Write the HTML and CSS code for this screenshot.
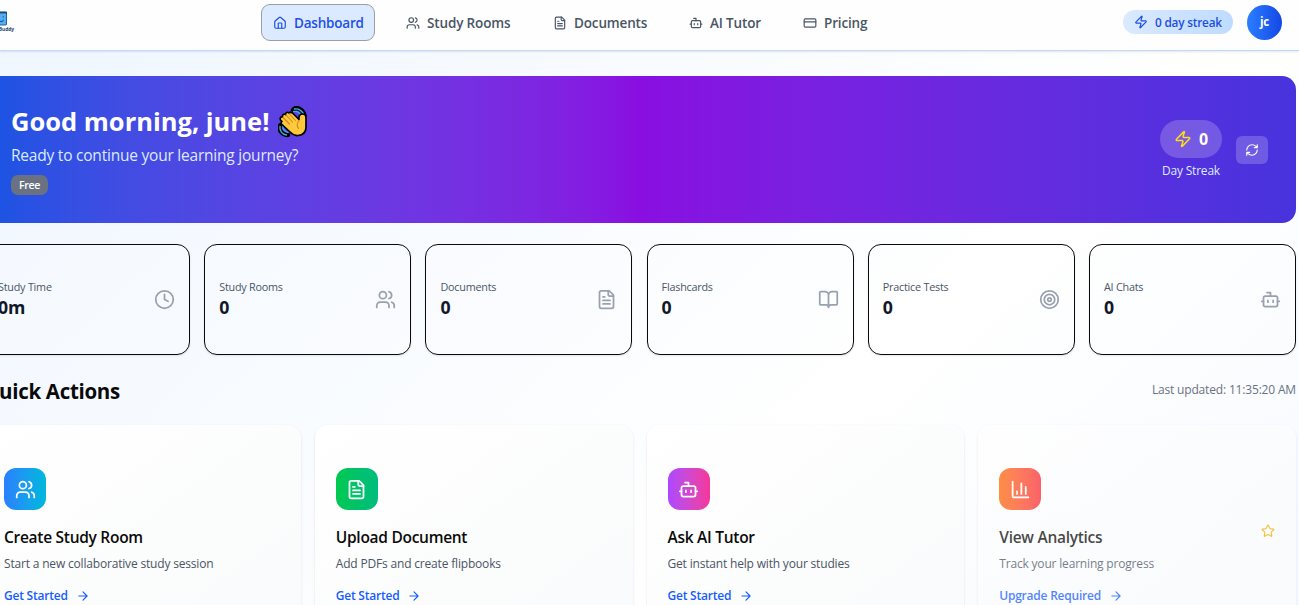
FILE: index.html
```html
<!DOCTYPE html>
<html lang="en">
<head>
<meta charset="utf-8">
<title>Study Buddy</title>
<link rel="stylesheet" href="styles.css">
</head>
<body>
<svg class="sprite" aria-hidden="true">
  <symbol id="home" viewBox="0 0 24 24"><path d="M15 21v-8a1 1 0 0 0-1-1h-4a1 1 0 0 0-1 1v8"/><path d="M3 10a2 2 0 0 1 .7-1.5l7-6a2 2 0 0 1 2.6 0l7 6A2 2 0 0 1 21 10v9a2 2 0 0 1-2 2H5a2 2 0 0 1-2-2z"/></symbol>
  <symbol id="users" viewBox="0 0 24 24"><path d="M16 21v-2a4 4 0 0 0-4-4H6a4 4 0 0 0-4 4v2"/><circle cx="9" cy="7" r="4"/><path d="M22 21v-2a4 4 0 0 0-3-3.87M16 3.13a4 4 0 0 1 0 7.75"/></symbol>
  <symbol id="file" viewBox="0 0 24 24"><path d="M15 2H6a2 2 0 0 0-2 2v16a2 2 0 0 0 2 2h12a2 2 0 0 0 2-2V7Z"/><path d="M14 2v4a2 2 0 0 0 2 2h4M10 9H8M16 13H8M16 17H8"/></symbol>
  <symbol id="bot" viewBox="0 0 24 24"><path d="M12 8V4H8"/><rect x="4" y="8" width="16" height="12" rx="2"/><path d="M2 14h2M20 14h2M15 13v2M9 13v2"/></symbol>
  <symbol id="card" viewBox="0 0 24 24"><rect x="2" y="5" width="20" height="14" rx="2"/><path d="M2 10h20"/></symbol>
  <symbol id="zap" viewBox="0 0 24 24"><path d="M4 14a1 1 0 0 1-.78-1.63l9.9-10.2a.5.5 0 0 1 .86.46l-1.92 6.02A1 1 0 0 0 13 10h7a1 1 0 0 1 .78 1.63l-9.9 10.2a.5.5 0 0 1-.86-.46l1.92-6.02A1 1 0 0 0 11 14z"/></symbol>
  <symbol id="refresh" viewBox="0 0 24 24"><path d="M3 12a9 9 0 0 1 9-9 9.75 9.75 0 0 1 6.74 2.74L21 8M21 3v5h-5M21 12a9 9 0 0 1-9 9 9.75 9.75 0 0 1-6.74-2.74L3 16M8 16H3v5"/></symbol>
  <symbol id="clock" viewBox="0 0 24 24"><circle cx="12" cy="12" r="10"/><path d="M12 6v6l4 2"/></symbol>
  <symbol id="book" viewBox="0 0 24 24"><path d="M12 7v14M3 18a1 1 0 0 1-1-1V4a1 1 0 0 1 1-1h5a4 4 0 0 1 4 4 4 4 0 0 1 4-4h5a1 1 0 0 1 1 1v13a1 1 0 0 1-1 1h-6a3 3 0 0 0-3 3 3 3 0 0 0-3-3z"/></symbol>
  <symbol id="target" viewBox="0 0 24 24"><circle cx="12" cy="12" r="10"/><circle cx="12" cy="12" r="6"/><circle cx="12" cy="12" r="2"/></symbol>
  <symbol id="chart" viewBox="0 0 24 24"><path d="M3 3v16a2 2 0 0 0 2 2h16M18 17V9M13 17V5M8 17v-3"/></symbol>
  <symbol id="arrow" viewBox="0 0 24 24"><path d="M5 12h14M12 5l7 7-7 7"/></symbol>
  <symbol id="star" viewBox="0 0 24 24"><path d="M11.525 2.295a.53.53 0 0 1 .95 0l2.31 4.679a2.123 2.123 0 0 0 1.595 1.16l5.166.756a.53.53 0 0 1 .294.904l-3.736 3.638a2.123 2.123 0 0 0-.611 1.878l.882 5.14a.53.53 0 0 1-.771.56l-4.618-2.428a2.122 2.122 0 0 0-1.973 0L6.396 21.01a.53.53 0 0 1-.77-.56l.881-5.139a2.122 2.122 0 0 0-.611-1.879L2.16 9.795a.53.53 0 0 1 .294-.906l5.165-.755a2.122 2.122 0 0 0 1.597-1.16z"/></symbol>
</svg>

<header class="topbar">
  <div class="logo">
    <svg class="logo-mark" viewBox="0 0 14 14"><rect x=".5" y="1" width="13" height="12" rx=".8" fill="#54aef5" stroke="#1d6599"/><path d="M0 1.5h14" stroke="#1d4a6b" stroke-width="1.5"/><path d="M7 9c1.5 1.6 3.4.8 3.6-.8M10.5 5v1" fill="none" stroke="#1d5685"/></svg>
    <span class="logo-name">StudyBuddy</span>
  </div>
  <nav class="nav">
    <a class="nav-item active"><svg class="icon"><use href="#home"/></svg><span>Dashboard</span></a>
    <a class="nav-item rooms"><svg class="icon"><use href="#users"/></svg><span>Study Rooms</span></a>
    <a class="nav-item docs"><svg class="icon"><use href="#file"/></svg><span>Documents</span></a>
    <a class="nav-item tutor"><svg class="icon"><use href="#bot"/></svg><span>AI Tutor</span></a>
    <a class="nav-item"><svg class="icon"><use href="#card"/></svg><span>Pricing</span></a>
  </nav>
  <div class="account">
    <div class="streak-chip"><svg class="icon"><use href="#zap"/></svg><span>0 day streak</span></div>
    <div class="avatar">jc</div>
  </div>
</header>

<main class="page">
  <section class="banner">
    <div class="greeting">
      <h1 class="hello"><span>Good morning, june!</span>
        <svg class="wave" viewBox="0 0 30 32">
          <path d="M15 4c3-4 10-1 11.500 5.500M2.500 19c-2.500 4 1 10 7.500 10" fill="none" stroke="#000" stroke-width="4.500" stroke-linecap="round"/>
          <path d="M16.500 3c4-1 8 2 9.500 6M15.500 5.500c3-.5 6 1 7 4M2 20.500c-.5 4 2 8 6.500 8.500M5 20.500c0 3 2 5 5 6" fill="none" stroke="#35b4df" stroke-width="1.300" stroke-linecap="round"/>
          <path d="M2.500 14c-1-2 .5-3.500 2-3-.5-2 1-3.500 3-2.500 0-2 2-3 3.500-1.500 1.500-1.500 3-.5 4 .5l6 6c-.5-3 .5-5.500 3.500-5.500 2.500 0 3.500 1.500 3.500 4v9c0 5-3 8-8 8.500-4 .5-6-1.500-8-3.500L4 18.500c-1.500-1.500-1-3 0-3z" fill="#ffc83d" stroke="#000" stroke-width="1.700" stroke-linejoin="round"/>
          <path d="M5 11.500l6.500 6.500M8 9l6.500 7M11.500 8l6 6.500M21 14.500c-2.500 3-2.500 5-.5 8" fill="none" stroke="#cf8a1b" stroke-width="1.100" stroke-linecap="round"/>
        </svg>
      </h1>
      <p class="tagline">Ready to continue your learning journey?</p>
      <span class="plan">Free</span>
    </div>
    <div class="banner-side">
      <div class="streak">
        <div class="streak-pill"><svg class="icon"><use href="#zap"/></svg><span>0</span></div>
        <div class="streak-label">Day Streak</div>
      </div>
      <button class="refresh"><svg class="icon"><use href="#refresh"/></svg></button>
    </div>
  </section>

  <section class="stats">
    <div class="stat"><div><div class="stat-label">Study Time</div><div class="stat-value">0m</div></div><svg class="icon"><use href="#clock"/></svg></div>
    <div class="stat"><div><div class="stat-label">Study Rooms</div><div class="stat-value">0</div></div><svg class="icon"><use href="#users"/></svg></div>
    <div class="stat"><div><div class="stat-label">Documents</div><div class="stat-value">0</div></div><svg class="icon"><use href="#file"/></svg></div>
    <div class="stat"><div><div class="stat-label">Flashcards</div><div class="stat-value">0</div></div><svg class="icon"><use href="#book"/></svg></div>
    <div class="stat"><div><div class="stat-label">Practice Tests</div><div class="stat-value">0</div></div><svg class="icon"><use href="#target"/></svg></div>
    <div class="stat"><div><div class="stat-label">AI Chats</div><div class="stat-value">0</div></div><svg class="icon"><use href="#bot"/></svg></div>
  </section>

  <div class="section-head">
    <h2>Quick Actions</h2>
    <span class="updated">Last updated: 11:35:20 AM</span>
  </div>

  <section class="actions">
    <article class="action">
      <div class="tile blue"><svg class="icon"><use href="#users"/></svg></div>
      <h3>Create Study Room</h3>
      <p class="desc">Start a new collaborative study session</p>
      <a class="go"><span>Get Started</span><svg class="icon"><use href="#arrow"/></svg></a>
    </article>
    <article class="action">
      <div class="tile green"><svg class="icon"><use href="#file"/></svg></div>
      <h3>Upload Document</h3>
      <p class="desc">Add PDFs and create flipbooks</p>
      <a class="go"><span>Get Started</span><svg class="icon"><use href="#arrow"/></svg></a>
    </article>
    <article class="action">
      <div class="tile pink"><svg class="icon"><use href="#bot"/></svg></div>
      <h3>Ask AI Tutor</h3>
      <p class="desc">Get instant help with your studies</p>
      <a class="go"><span>Get Started</span><svg class="icon"><use href="#arrow"/></svg></a>
    </article>
    <article class="action locked">
      <div class="tile orange"><svg class="icon"><use href="#chart"/></svg></div>
      <div class="title-row"><h3>View Analytics</h3><svg class="icon star"><use href="#star"/></svg></div>
      <p class="desc">Track your learning progress</p>
      <a class="go"><span>Upgrade Required</span><svg class="icon"><use href="#arrow"/></svg></a>
    </article>
  </section>
</main>
</body>
</html>
```
FILE: styles.css
```css
* { box-sizing: border-box; }
html { overflow: hidden; }
body {
  margin: 0;
  height: 605px;
  overflow: hidden;
  font-family: "Open Sans", "Noto Sans", sans-serif;
  color: #0a0a0a;
  background: linear-gradient(to bottom right, #eff6ff, #fff 50%, #eff6ff) 0 0 / 1299px 1150px no-repeat;
}
h1, h2, h3, p { margin: 0; }
span, h2, h3, p { white-space: nowrap; }
.sprite { display: none; }
.icon {
  display: block;
  flex: none;
  width: 14px;
  height: 14px;
  fill: none;
  stroke: currentColor;
  stroke-width: 2;
  stroke-linecap: round;
  stroke-linejoin: round;
}

.topbar {
  display: flex;
  height: 51px;
  padding: 4px 17px 0 0;
  background: #fefefe;
  border-bottom: 1px solid #bedbff;
  box-shadow: 0 1px 2px rgba(0, 0, 0, .1);
}
.logo {
  display: flex;
  flex-direction: column;
  align-items: center;
  width: 29px;
  margin-left: -15px;
  padding-top: 7px;
}
.logo-mark { width: 15px; height: 15px; }
.logo-name { font-size: 5px; font-weight: 700; line-height: 6px; color: #1f4b70; letter-spacing: -.1px; }
.nav { display: flex; gap: 19px; margin-left: 247px; }
.nav-item {
  display: flex;
  align-items: center;
  gap: 7px;
  height: 37px;
  padding: 0 11px;
  border: 1px solid transparent;
  border-radius: 9px;
  font-size: 13.500px;
  font-weight: 600;
  letter-spacing: -.15px;
  color: #4a5565;
}
.nav-item.active { width: 114px; letter-spacing: -.2px; color: #1f4fe5; background: #dbeafe; border-color: #999fa8; }
.nav-item.rooms { width: 128px; }
.nav-item.docs { width: 117px; }
.nav-item.tutor { width: 95px; }
.account { display: flex; gap: 14px; margin-left: auto; }
.streak-chip {
  display: flex;
  align-items: center;
  gap: 7px;
  width: 110px;
  height: 24px;
  margin-top: 6px;
  padding-left: 11px;
  border-radius: 12px;
  background: linear-gradient(to right, #dbeafe, #bedbff);
  color: #1d4fe0;
  font-size: 11.800px;
  font-weight: 600;
  letter-spacing: -.2px;
}
.avatar {
  width: 35px;
  height: 35px;
  margin-top: 1px;
  border-radius: 50%;
  background: linear-gradient(to right, #2b7fff, #1447e6);
  color: #fff;
  font-size: 11.500px;
  font-weight: 700;
  letter-spacing: -.3px;
  line-height: 34px;
  text-align: center;
}

.page { width: 1313px; margin: 25px 0 0 -17px; }
.banner {
  display: flex;
  justify-content: space-between;
  height: 147px;
  padding: 28px 28px 0;
  border-radius: 14px;
  background: linear-gradient(to right in oklab, #1354e3, #890ee1 50%, #4733dd);
  color: #fff;
}
.hello {
  display: flex;
  align-items: center;
  gap: 9px;
  height: 35px;
  font-size: 25.500px;
  font-weight: 700;
}
.hello span { padding-bottom: 2px; }
.wave { width: 30px; height: 32px; }
.tagline { margin-top: 3px; font-size: 15.500px; letter-spacing: -.22px; line-height: 27px; color: #dbeafe; }
.plan {
  display: block;
  width: 37px;
  height: 20px;
  margin-top: 6px;
  border-radius: 7px;
  background: #6a7282;
  font-size: 10.600px;
  letter-spacing: -.3px;
  font-weight: 600;
  line-height: 20px;
  text-align: center;
}
.banner-side { display: flex; gap: 14px; }
.streak { width: 62px; margin-top: 16px; text-align: center; }
.streak-pill {
  display: flex;
  align-items: center;
  gap: 7px;
  height: 38px;
  padding-left: 14px;
  border-radius: 19px;
  background: rgba(255, 255, 255, .2);
  font-size: 16px;
  font-weight: 700;
}
.streak-pill .icon { width: 18px; height: 18px; color: #fddb1f; }
.streak-label { margin: 3px -5px 0; font-size: 12px; letter-spacing: -.2px; line-height: 20px; color: #dbeafe; white-space: nowrap; }
.refresh {
  display: grid;
  place-items: center;
  width: 32px;
  height: 28px;
  margin-top: 32px;
  padding: 0;
  border: 0;
  border-radius: 6px;
  background: rgba(255, 255, 255, .2);
  color: #fff;
}

.stats { display: grid; grid-template-columns: repeat(6, 1fr); gap: 14.200px; margin-top: 21px; }
.stat {
  display: flex;
  align-items: center;
  justify-content: space-between;
  height: 111px;
  padding: 0 14px;
  border: 1px solid #0a0a0a;
  border-radius: 13px;
  background: rgba(255, 255, 255, .2);
  box-shadow: 0 1px 2px rgba(0, 0, 0, .1);
}
.stat-label { font-size: 10.800px; letter-spacing: -.22px; line-height: 14px; color: #4a5565; white-space: nowrap; }
.stat-value { font-size: 17.700px; font-weight: 700; line-height: 26px; color: #101828; }
.stat .icon { width: 21px; height: 21px; color: #99a1af; }

.section-head { display: flex; justify-content: space-between; height: 70px; padding-top: 21px; }
.section-head h2 { font-size: 20.500px; font-weight: 700; letter-spacing: -.3px; line-height: 30px; }
.updated { font-size: 12px; letter-spacing: -.17px; line-height: 28px; color: #6a7282; }

.actions { display: grid; grid-template-columns: repeat(4, 1fr); gap: 14px; }
.action {
  height: 230px;
  padding: 43px 21px 0;
  border-radius: 13px;
  background: linear-gradient(to bottom right, #fff, #f9fafb);
  box-shadow: 0 1px 3px rgba(0, 0, 0, .1);
}
.locked { opacity: .75; }
.tile { display: grid; place-items: center; width: 42px; height: 42px; border-radius: 12px; color: #fff; }
.tile .icon { width: 21px; height: 21px; }
.blue { background: linear-gradient(to right in oklab, #2b7fff, #00b8db); }
.green { background: linear-gradient(to right in oklab, #00c950, #00bc7d); }
.pink { background: linear-gradient(to right in oklab, #ad46ff, #f6339a); }
.orange { background: linear-gradient(to right in oklab, #ff6900, #fb2c36); }
.action h3 { margin-top: 15px; font-size: 15.500px; font-weight: 600; letter-spacing: -.28px; line-height: 25px; }
.desc { margin-top: 3px; font-size: 12px; letter-spacing: -.18px; line-height: 21px; color: #4a5565; }
.go { display: flex; align-items: center; gap: 8px; margin-top: 11px; font-size: 12px; font-weight: 600; letter-spacing: -.22px; line-height: 21px; color: #155dfc; }
.title-row { display: flex; justify-content: space-between; }
.star { margin: 14px 0 0; color: #f0b100; }
```
